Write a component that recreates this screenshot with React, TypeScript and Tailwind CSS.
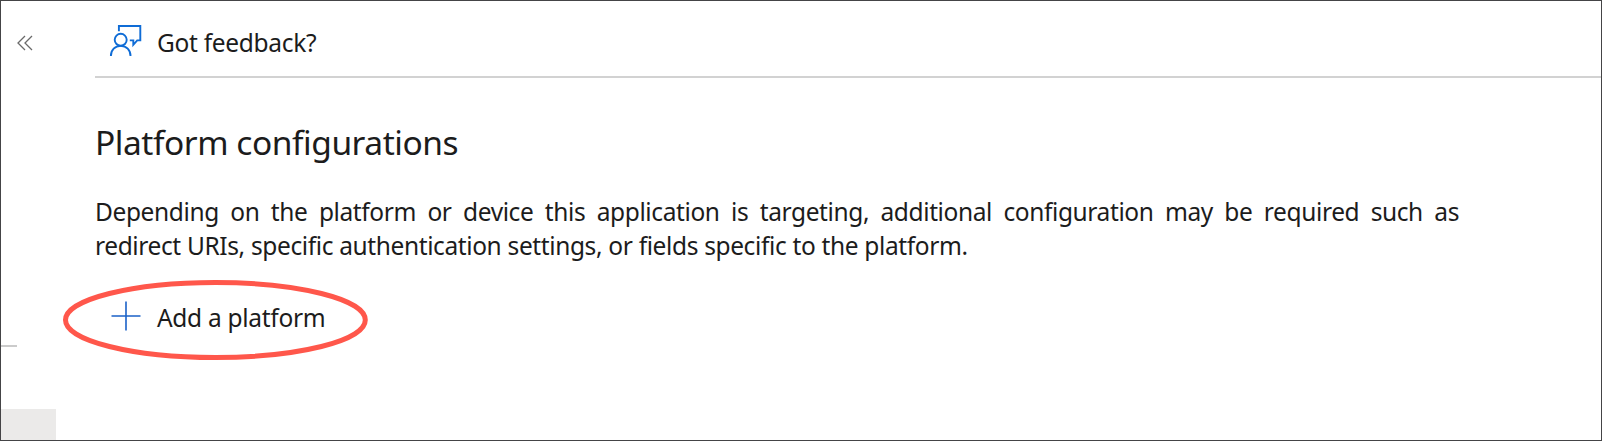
import type { ReactNode } from "react";

function FeedbackIcon() {
  return (
    <svg width="34" height="34" viewBox="0 0 34 34" fill="none" stroke="#0f6cd6" strokeWidth="1.9">
      <path d="M9.9 7.2V2H31.3V16.4H28.2L24.3 20.8V16.4H20.8" />
      <circle cx="11.7" cy="15.8" r="6" />
      <path d="M1.9 32C1.9 26 6 21.9 11.7 21.9S21.5 26 21.5 32" />
    </svg>
  );
}

function PlusIcon() {
  return (
    <svg width="30" height="30" viewBox="0 0 30 30" fill="none" stroke="#1b62c8" strokeWidth="1.6">
      <path d="M15 .5V29.5M.5 15H29.5" />
    </svg>
  );
}

function CollapseIcon() {
  return (
    <svg width="16" height="16" viewBox="0 0 16 16" fill="none" stroke="#6a6a6a" strokeWidth="1.3">
      <path d="M8 1L1 8L8 15M15 1L8 8L15 15" />
    </svg>
  );
}

function Command({ icon, children }: { icon: ReactNode; children: ReactNode }) {
  return (
    <button className="flex items-center whitespace-nowrap">
      <span className="flex w-[47px] justify-start">{icon}</span>
      {children}
    </button>
  );
}

export default function App() {
  return (
    <div className="flex h-[441px] w-[1602px] overflow-hidden border border-[#444446] bg-white font-['Noto_Sans','Open_Sans',sans-serif] text-[24.5px] text-[#1c1c1c]">
      <aside className="flex w-[55px] shrink-0 flex-col">
        <button className="ml-4 mt-[34px] self-start">
          <CollapseIcon />
        </button>
        <div className="mt-auto h-[2px] w-4 bg-[#cbcbcb]" />
        <div className="mt-[62px] h-[31px] w-[54.5px] bg-[#ebeae9]" />
      </aside>
      <main className="flex min-w-0 flex-1 flex-col pl-[39px]">
        <header className="flex h-[77px] items-center border-b-2 border-[#d2d2d2] pl-[14px] pt-[5px]">
          <Command icon={<FeedbackIcon />}>
            <span className="ml-px pt-[4px] tracking-[-0.3px]">Got feedback?</span>
          </Command>
        </header>
        <h1 className="mt-[40px] text-[33.5px] leading-[48px] tracking-[-0.46px]">Platform configurations</h1>
        <p className="mt-[29px] w-[1364px] leading-[34px] tracking-[-0.39px] [word-spacing:0.2px]">
          <span className="block whitespace-nowrap [text-align-last:justify]">
            Depending on the platform or device this application is targeting, additional configuration may be required such as
          </span>
          <span className="block">redirect URIs, specific authentication settings, or fields specific to the platform.</span>
        </p>
        <div className="relative mt-[35px] flex h-[36px] items-center self-start pl-[16px]">
          <Command icon={<PlusIcon />}>
            <span className="-ml-px pt-[5px] tracking-[-0.3px]">Add a platform</span>
          </Command>
          <svg className="pointer-events-none absolute -left-[33px] -top-[19px]" width="306" height="82" viewBox="0 0 306 82" fill="none">
            <ellipse cx="153.4" cy="41" rx="149.9" ry="37.5" stroke="#ff574b" strokeWidth="5" />
          </svg>
        </div>
      </main>
    </div>
  );
}
